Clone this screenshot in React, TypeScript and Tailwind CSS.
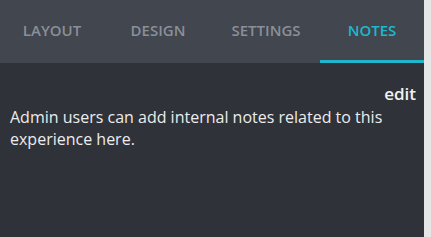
import React from "react";

const tabs = [
  { label: "LAYOUT", w: "w-[104px]", active: false },
  { label: "DESIGN", w: "w-[108px]", active: false },
  { label: "SETTINGS", w: "w-[108px]", active: false },
  { label: "NOTES", w: "w-[104px]", active: true },
];

export default function App() {
  return (
    <div className="flex h-[237px] w-[431px] bg-[#e6e6e6]" style={{ fontFamily: '"Open Sans", "Liberation Sans", sans-serif' }}>
      <div className="flex h-full w-[424px] flex-col bg-[#2f3239]">
        <div className="flex h-[63px] bg-[#41464f]">
          {tabs.map((t) => (
            <div
              key={t.label}
              className={`${t.w} flex h-full items-center justify-center border-b-[3px] text-[15px] font-semibold ${
                t.active ? "border-[#20b7cc] text-[#20b7cc]" : "border-transparent text-[#8b8f97]"
              }`}
            >
              {t.label}
            </div>
          ))}
        </div>
        <div className="flex justify-end pr-[8px] pt-[20px] text-[17px] font-semibold leading-[22px] text-[#f2f2f2]">
          edit
        </div>
        <p className="mt-[1px] px-[10px] text-[16px] leading-[22px] text-[#ececec]">
          Admin users can add internal notes related to this experience here.
        </p>
      </div>
    </div>
  );
}
